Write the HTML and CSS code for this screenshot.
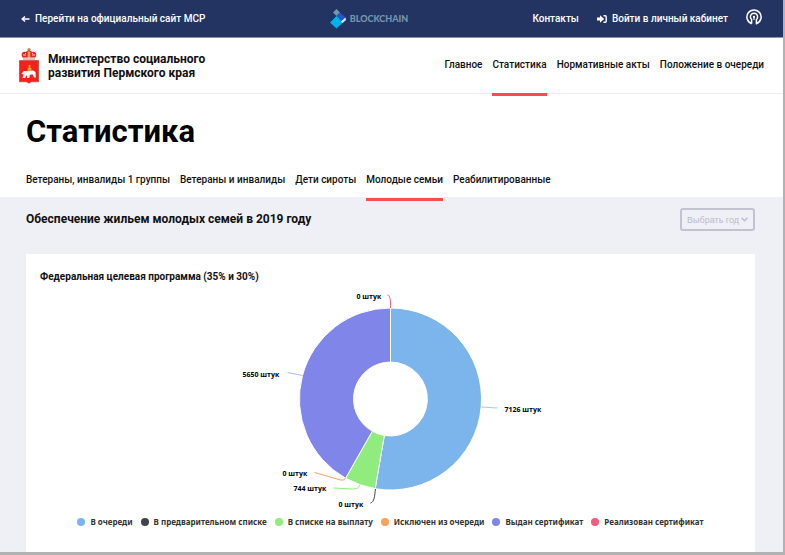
FILE: index.html
```html
<!DOCTYPE html>
<html lang="ru">
<head>
<meta charset="utf-8">
<meta name="viewport" content="width=device-width, initial-scale=1">
<title>Статистика</title>
<link rel="stylesheet" href="styles.css">
</head>
<body>
<div class="page">
  <div class="topbar">
    <a class="topbar-link back" href="#">
      <svg width="9" height="8" viewBox="0 0 9 8"><path d="M8.500 4H2M4 1.500 1.200 4 4 6.500" fill="none" stroke="currentColor" stroke-width="1.500"/></svg>
      Перейти на официальный сайт МСР</a>
    <a class="brand" href="#">
      <svg width="20" height="20" viewBox="0 0 20 20">
        <path d="M9.500 0 13 3.500 9.500 7 6 3.500z" fill="#7597ad"/>
        <path d="M5 4.500 10 9.500 5.500 13 1 8.500z" fill="#123a66"/>
        <path d="M13 3.500 19 9 15 13 9.500 7z" fill="#2456c4"/>
        <path d="M9.500 7 16 13.500 9.500 19.500 3 13.500z" fill="#00b2ea"/>
        <path d="M18.500 8.500 19 11 15.500 14 14 12.500z" fill="#dceaf4"/>
      </svg>
      BLOCKCHAIN</a>
    <div class="topbar-right">
      <a class="topbar-link" href="#">Контакты</a>
      <a class="topbar-link login" href="#">
        <svg width="10" height="8" viewBox="0 0 10 8"><path d="M0 2.500h3V.2L7.200 4 3 7.800V5.500H0z" fill="currentColor"/><path d="M6.500.7h1.700q1 0 1 1v4.600q0 1-1 1H6.500" fill="none" stroke="currentColor" stroke-width="1.400"/></svg>
        Войти в личный кабинет</a>
      <a class="access" href="#" aria-label="Версия для слабовидящих">
        <svg width="16" height="16" viewBox="0 0 16 16" fill="none" stroke="currentColor">
          <path d="M5.600 14.700A7.100 7.100 0 1 1 10.400 14.700V10.500A3.600 3.600 0 1 0 5.600 10.500V14.700" stroke-width="1.500" stroke-linejoin="round"/>
          <path d="M8 7.500V11" stroke-width="1.200"/>
          <circle cx="8" cy="7.800" r="1.100" fill="currentColor" stroke="none"/>
        </svg></a>
    </div>
  </div>

  <header class="header">
    <a class="ministry" href="#">
      <svg width="20" height="36" viewBox="1 0 20 36">
        <path d="M11 0v4M9.300 1.500h3.400" stroke="#b58a35" stroke-width="1.300"/>
        <path d="M5 10C2 6 4.500 2.500 8 4 9 2 13 2 14 4 17.500 2.500 20 6 17 10z" fill="#e02a2c"/>
        <path d="M9.700 3.500h2.600v6.500H9.700z" fill="#d8a44a"/>
        <path d="M5 7h3M14 7h3M7 5l1 1M14 6l1-1" stroke="#fbd6d0"/>
        <path d="M5 9.500h12v2.500H5z" fill="#f3e0dc"/><path d="M5.500 11h11" stroke="#c65a50" stroke-dasharray="1 1"/>
        <path d="M1.300 12.500h19.400v21.300h-7.200L11 35.300 8.500 33.800H1.300z" fill="#f5221b" stroke="#a94739" stroke-width=".6"/>
        <path d="M9.500 20h4v3h-4z" fill="#d99b24"/><path d="M11.500 17v4" stroke="#f3b12c" stroke-width="1.800"/>
        <path d="M3.500 25.500 6 23l3 .2 6-.7 2.500 1.500.3 5.500h-2l-1-3-3 .3-.5 3.200H9l-.3-3-1.700 3H4.500l1-3.500z" fill="#fff"/>
      </svg>
      <span>Министерство социального<br>развития Пермского края</span>
    </a>
    <nav class="nav">
      <a href="#">Главное</a>
      <a class="active" href="#">Статистика</a>
      <a href="#">Нормативные акты</a>
      <a href="#">Положение в очереди</a>
    </nav>
  </header>

  <h1>Статистика</h1>
  <nav class="nav tabs">
    <a href="#">Ветераны, инвалиды 1 группы</a>
    <a href="#">Ветераны и инвалиды</a>
    <a href="#">Дети сироты</a>
    <a class="active" href="#">Молодые семьи</a>
    <a href="#">Реабилитированные</a>
  </nav>

  <main class="content">
    <div class="content-head">
      <h2>Обеспечение жильем молодых семей в 2019 году</h2>
      <button class="year" type="button">Выбрать год
        <svg width="7" height="5" viewBox="0 0 7 5"><path d="m.5.7 3 3 3-3" fill="none" stroke="currentColor" stroke-width="1.500"/></svg></button>
    </div>
    <section class="card">
      <h3>Федеральная целевая программа (35% и 30%)</h3>
      <svg class="chart" viewBox="-200 -110 400 220" role="img" aria-label="Федеральная целевая программа">
        <g stroke="#fff" stroke-width="1">
          <path d="M0-91A91 91 0 1 1-15.300 89.700L-6.200 36.500A37 37 0 1 0 0-37z" fill="#7cb5ec"/>
          <path d="M-15.300 89.700A91 91 0 0 1-44.900 79.200L-18.200 32.200A37 37 0 0 0-6.200 36.500z" fill="#90ed7d"/>
          <path d="M-44.900 79.200A91 91 0 0 1 0-91V-37A37 37 0 0 0-18.200 32.200z" fill="#8085e9"/>
        </g>
        <g fill="none" stroke-width="1">
          <path d="M-3-104C0-104 0-98 0-91" stroke="#f15c80"/>
          <path d="M-103-26.500-88-23.500" stroke="#b3b5f2"/>
          <path d="M91 8 107 9" stroke="#a3ccf2"/>
          <path d="M-76 73.500-50 81Q-46 82-45 79" stroke="#f7a35c"/>
          <path d="M-57 89-38 90Q-31 90-31 86" stroke="#90ed7d"/>
          <path d="M-20 104C-16 103-16 97-15 90" stroke="#434348"/>
        </g>
        <g class="labels">
          <text x="-34" y="-100">0 штук</text>
          <text x="-148" y="-22">5650 штук</text>
          <text x="114" y="13">7126 штук</text>
          <text x="-108" y="77">0 штук</text>
          <text x="-97" y="92">744 штук</text>
          <text x="-52" y="108">0 штук</text>
        </g>
      </svg>
      <ul class="legend">
        <li class="c1">В очереди</li>
        <li class="c2">В предварительном списке</li>
        <li class="c3">В списке на выплату</li>
        <li class="c4">Исключен из очереди</li>
        <li class="c5">Выдан сертификат</li>
        <li class="c6">Реализован сертификат</li>
      </ul>
    </section>
  </main>
</div>
</body>
</html>
```
FILE: styles.css
```css
* { box-sizing: border-box; }
body {
  margin: 0;
  padding: 0 2px 3px 0;
  background: #b2b2b2;
  font-family: Roboto, "Liberation Sans", sans-serif;
  font-size: 10px;
  font-weight: 500;
  color: #111;
}
a { color: inherit; text-decoration: none; }
h1, h2, h3, ul { margin: 0; padding: 0; }
svg { display: block; flex: none; }
.page {
  display: flex;
  flex-direction: column;
  min-height: calc(100vh - 3px);
  background: #fff;
}
.topbar {
  display: grid;
  grid-template-columns: 1fr auto 1fr;
  align-items: center;
  height: 38px;
  padding: 0 21px;
  background: #243462;
  border-bottom: 1px solid #8c94ae;
  color: #fff;
}
.topbar-link { display: flex; align-items: center; gap: 5px; }
.brand {
  display: flex;
  align-items: center;
  gap: 3px;
  margin-right: 48px;
  color: #7597ad;
  font: 900 9px Lato, sans-serif;
}
.topbar-right { display: flex; align-items: center; justify-content: flex-end; gap: 18px; }
.access { padding-bottom: 4px; }
.header {
  display: flex;
  justify-content: space-between;
  height: 56px;
  padding: 0 19px;
  border-bottom: 1px solid #ececf3;
}
.ministry {
  display: flex;
  align-items: center;
  gap: 9px;
  font-size: 12px;
  line-height: 14px;
  font-weight: 700;
}
.nav { display: flex; gap: 10px; position: relative; }
.nav a {
  height: 58px;
  line-height: 54px;
  border-bottom: 3px solid transparent;
  white-space: nowrap;
}
.nav .active { border-color: #fc4c50; }
h1 {
  padding: 18px 26px 0;
  font-size: 31px;
  line-height: 39px;
  font-weight: 700;
  color: #000;
}
.tabs { height: 46px; padding: 0 26px; }
.tabs a { height: 50px; line-height: 58px; }
.content {
  flex: 1;
  display: flex;
  flex-direction: column;
  padding: 0 28px 0 26px;
  background: #eff0f6;
}
.content-head {
  display: flex;
  justify-content: space-between;
  align-items: flex-start;
  padding: 11px 0 23px;
}
h2 { font-size: 12px; line-height: 22px; font-weight: 700; }
.year {
  display: flex;
  align-items: center;
  gap: 2px;
  height: 23px;
  padding: 0 5px;
  border: 2px solid #c1c3d0;
  border-radius: 3px;
  background: transparent;
  color: #b9bbca;
  font: 9px "Liberation Sans", sans-serif;
}
.card { flex: 1; padding: 14px; background: #fff; }
h3 { font-size: 10px; line-height: 18px; font-weight: 700; }
.chart { width: 100%; height: 220px; margin-top: 3px; overflow: visible; }
.labels { font: 700 7px "Open Sans", sans-serif; fill: #000; }
.legend {
  display: flex;
  justify-content: center;
  gap: 8px;
  margin-top: 6px;
  list-style: none;
  font: 700 8px/14px "Noto Sans", sans-serif;
  color: #333;
}
.legend li { display: flex; align-items: center; gap: 5px; white-space: nowrap; }
.legend li::before {
  content: "";
  width: 8px;
  height: 8px;
  border-radius: 50%;
  background: currentColor;
}
.c1::before { color: #7cb5ec; }
.c2::before { color: #434348; }
.c3::before { color: #90ed7d; }
.c4::before { color: #f7a35c; }
.c5::before { color: #8085e9; }
.c6::before { color: #f15c80; }
```
